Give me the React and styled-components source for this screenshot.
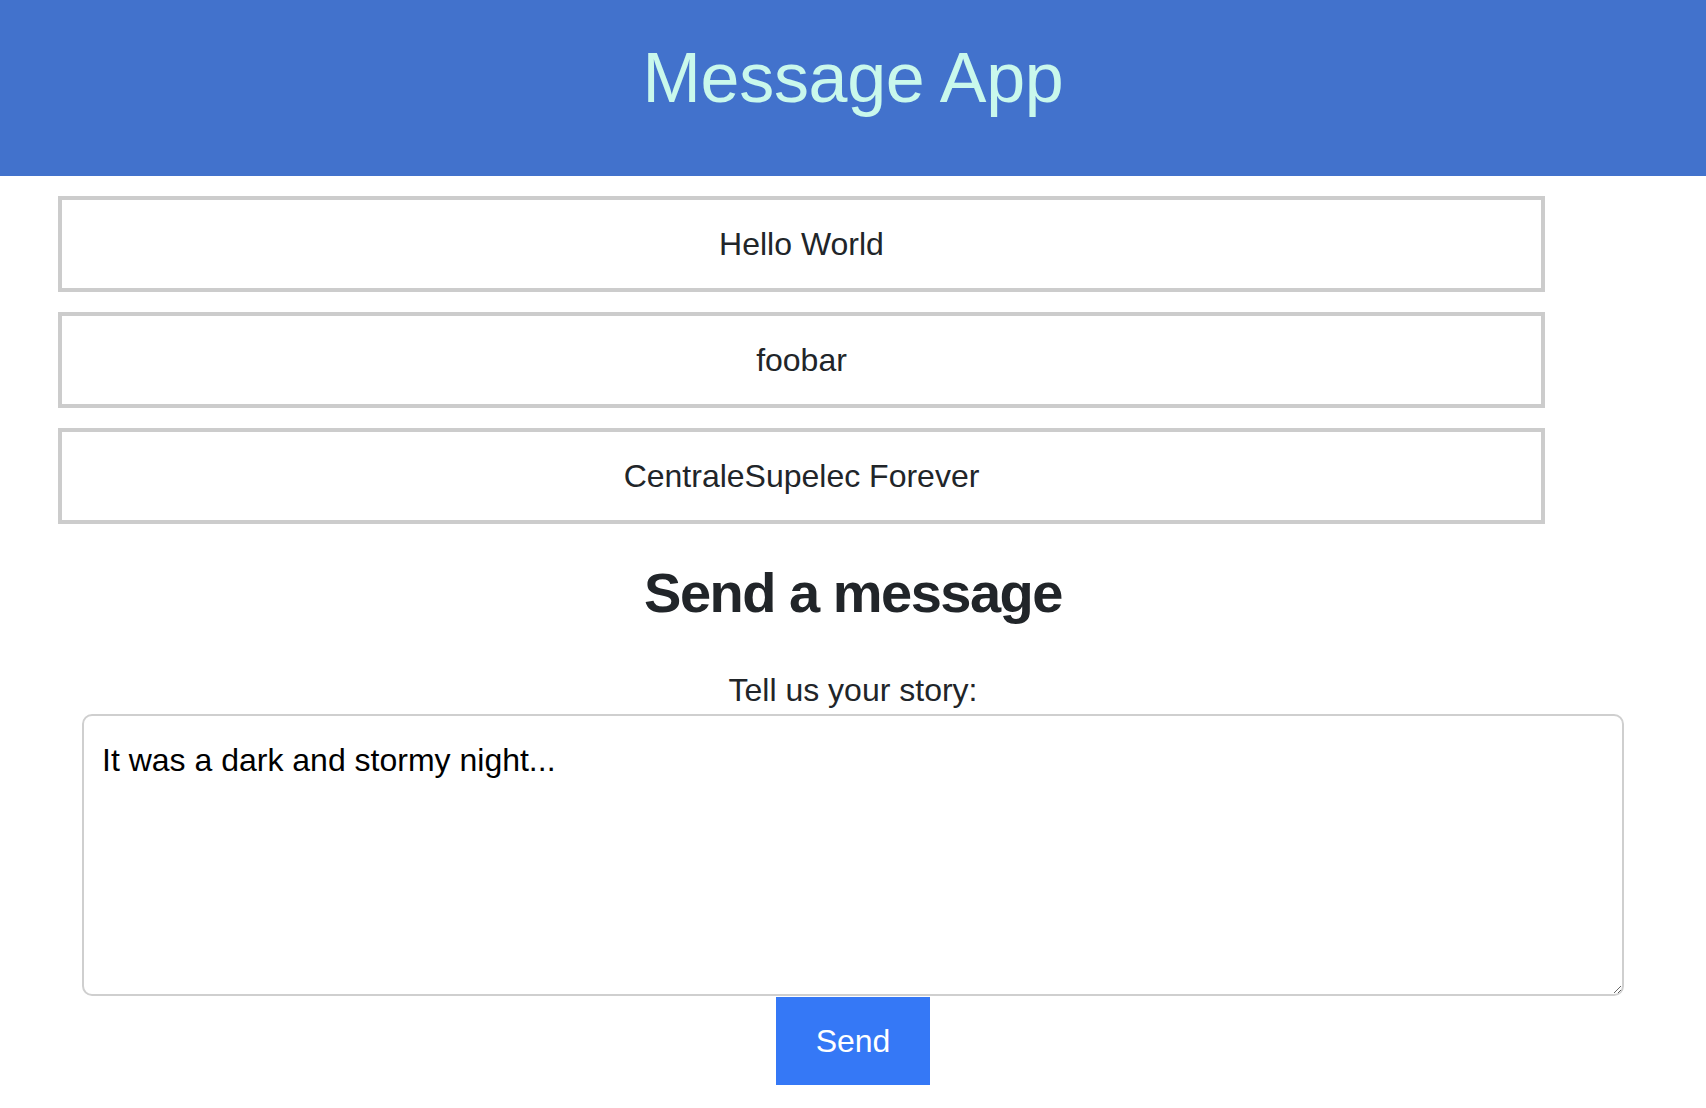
import React, { useState } from "react";
import styled, { createGlobalStyle } from "styled-components";

// Page-wide reset: no body margin, a named sans font
const GlobalStyle = createGlobalStyle`
  html, body {
    margin: 0;
    padding: 0;
    background: #fff;
  }
  body {
    font-family: "Liberation Sans", Arial, sans-serif;
    color: #212529;
  }
`;

const Page = styled.div`
  display: flex;
  flex-direction: column;
  min-height: 100vh;
`;

// Blue banner with the app name
const Header = styled.header`
  box-sizing: border-box;
  height: 176px;
  padding-top: 37px;
  background: #4272cc;
  text-align: center;
`;

const Title = styled.h1`
  margin: 0;
  font-size: 70px;
  font-weight: 400;
  line-height: 83px;
  letter-spacing: -0.3px;
  color: #c9f8ec;
`;

// List of posted messages
const MessageList = styled.div`
  display: flex;
  flex-direction: column;
  gap: 20px;
  width: 1487px;
  margin: 20px 0 0 58px;
`;

const MessageCard = styled.div`
  box-sizing: border-box;
  height: 96px;
  display: flex;
  align-items: center;
  justify-content: center;
  border: 4px solid #cccccc;
  font-size: 32px;
  line-height: 48px;
  color: #212529;
`;

// Form to send a new message
const Composer = styled.form`
  display: flex;
  flex-direction: column;
  align-items: center;
  padding-top: 34px;
`;

const SectionTitle = styled.h2`
  margin: 0;
  font-size: 56px;
  font-weight: 700;
  line-height: 69px;
  letter-spacing: -1.5px;
  color: #212529;
`;

const Label = styled.label`
  margin-top: 39px;
  font-size: 32px;
  line-height: 48px;
  color: #212529;
`;

const StoryInput = styled.textarea`
  box-sizing: border-box;
  width: 1542px;
  height: 282px;
  margin-top: 0;
  padding: 20px 18px 8px;
  border: 2px solid #cfcfcf;
  border-radius: 10px;
  font-family: "Liberation Sans", Arial, sans-serif;
  font-size: 32px;
  line-height: 48px;
  color: #000;
  background: #fff;
  outline: none;
`;

const SendButton = styled.button`
  margin-top: 1px;
  padding: 20px 40px;
  border: none;
  border-radius: 0;
  background: #3578f6;
  color: #fff;
  font-family: "Liberation Sans", Arial, sans-serif;
  font-size: 32px;
  line-height: 48px;
  cursor: pointer;
`;

const App = () => {
  const [messages] = useState(["Hello World", "foobar", "CentraleSupelec Forever"]);

  return (
    <>
      <GlobalStyle />
      <Page>
        <Header>
          <Title>Message App</Title>
        </Header>
        <MessageList>
          {messages.map((m, i) => (
            <MessageCard key={i}>{m}</MessageCard>
          ))}
        </MessageList>
        <Composer onSubmit={(e) => e.preventDefault()}>
          <SectionTitle>Send a message</SectionTitle>
          <Label htmlFor="story">Tell us your story:</Label>
          <StoryInput id="story" defaultValue="It was a dark and stormy night..." />
          <SendButton type="submit">Send</SendButton>
        </Composer>
      </Page>
    </>
  );
};

export default App;
